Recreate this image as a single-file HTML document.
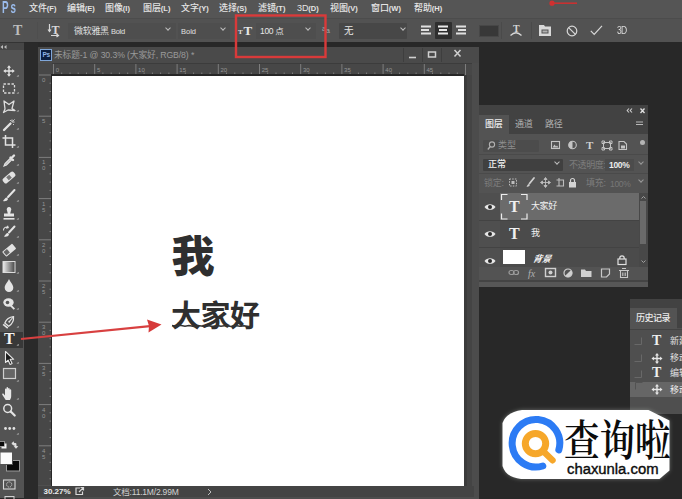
<!DOCTYPE html>
<html lang="zh-CN">
<head>
<meta charset="utf-8">
<title>Photoshop</title>
<style>
*{margin:0;padding:0;box-sizing:border-box}
html,body{width:682px;height:499px;overflow:hidden;background:#282828}
body{position:relative;font-family:"Liberation Sans","Noto Sans CJK SC",sans-serif;color:#d6d6d6;font-size:9px;line-height:1}
.a{position:absolute}
.t{position:absolute;white-space:nowrap}
svg{position:absolute;overflow:visible}
small{font-size:7.500px;font-weight:bold}
#menubar{left:0;top:0;width:682px;height:18px;background:#555}
#menubar .t{top:3.500px;font-size:9px;color:#e4e4e4;letter-spacing:-0.1px;font-weight:500}
#menubar .t small{letter-spacing:0}
#optbar{left:0;top:18px;width:682px;height:23.500px;background:#525252;border-top:1px solid #4c4c4c}
.dd{position:absolute;top:4px;height:16px;background:#474747;border-radius:1px}
.chev{position:absolute;width:4px;height:4px;border-right:1px solid #bdbdbd;border-bottom:1px solid #bdbdbd;transform:rotate(45deg)}
.sep{position:absolute;width:1px;background:#424242}
#tools{left:0;top:42px;width:24px;height:456px;background:#535353}
#toolhead{left:0;top:42px;width:24px;height:8px;background:#464646;border-top:1px solid #343434}
#doc{left:38px;top:47px;width:440.500px;height:452px;background:#4f4f4f}
#doctitle{left:38px;top:47px;width:440.500px;height:16px;background:#4a4a4a}
#canvas{left:52px;top:75.500px;width:412px;height:410px;background:#fff}
.ic{stroke:#d8d8d8;fill:none;stroke-width:1.2}
.icf{fill:#d8d8d8;stroke:none}
</style>
</head>
<body>
<!-- MENU BAR -->
<div class="a" id="menubar">
  <div class="t" style="left:1.500px;top:-1.500px;font-size:17px;color:#9bbcec;letter-spacing:3.200px;font-weight:bold;transform:scaleX(.58);transform-origin:0 0">Ps</div>
  <div class="t" style="left:29px">文件<small>(F)</small></div>
  <div class="t" style="left:67px">编辑<small>(E)</small></div>
  <div class="t" style="left:105px">图像<small>(I)</small></div>
  <div class="t" style="left:143px">图层<small>(L)</small></div>
  <div class="t" style="left:181px">文字<small>(Y)</small></div>
  <div class="t" style="left:219px">选择<small>(S)</small></div>
  <div class="t" style="left:258px">滤镜<small>(T)</small></div>
  <div class="t" style="left:297px">3D<small>(D)</small></div>
  <div class="t" style="left:330px">视图<small>(V)</small></div>
  <div class="t" style="left:371px">窗口<small>(W)</small></div>
  <div class="t" style="left:414px">帮助<small>(H)</small></div>
</div>
<!-- OPTIONS BAR -->
<div class="a" id="optbar">
  <div class="t" style="left:13px;top:5px;font-family:'Liberation Serif',serif;font-size:14px;font-weight:bold;color:#bcbcbc">T</div>
  <div class="sep" style="left:37px;top:3px;height:17px;background:#4e4e4e"></div>
  <!-- text orientation icon -->
  <div class="t" style="left:51.500px;top:5px;font-family:'Liberation Serif',serif;font-size:12px;color:#d8d8d8;font-weight:bold">T</div>
  <svg style="left:48px;top:5px" width="14" height="13"><path class="ic" d="M1.5 0v7M0 5.5l1.5 2 1.5-2M3 11.5h7M8.5 10l2 1.5-2 1.5" stroke-width="1"/></svg>
  <div class="dd" style="left:68px;width:108px;background:#4e4e4e"></div>
  <div class="t" style="left:74px;top:8px;font-size:9px;color:#e0e0e0;letter-spacing:-0.3px">微软雅黑 <span style="font-size:7.5px">Bold</span></div>
  <div class="chev" style="left:166px;top:7px"></div>
  <div class="dd" style="left:178px;width:52px;background:#4e4e4e"></div>
  <div class="t" style="left:181px;top:9px;font-size:7.5px;color:#e0e0e0">Bold</div>
  <div class="chev" style="left:221px;top:7px"></div>
  <!-- size -->
  <div class="t" style="left:243.500px;top:5px;font-family:'Liberation Serif',serif;font-size:13px;color:#e6e6e6;font-weight:bold">T</div>
  <div class="t" style="left:238px;top:10px;font-family:'Liberation Serif',serif;font-size:7px;color:#e6e6e6;font-weight:bold">T</div>
  <div class="dd" style="left:256px;width:60px;background:#4e4e4e"></div>
  <div class="t" style="left:260px;top:8px;font-size:8.5px;color:#e6e6e6;letter-spacing:-0.3px">100 点</div>
  <div class="chev" style="left:306px;top:7px"></div>
  <div class="t" style="left:322px;top:6px;font-size:7px;color:#a8a8a8;letter-spacing:-0.5px">a<span style="font-size:8px;position:relative;top:2px">a</span></div>
  <div class="dd" style="left:339px;width:68px"></div>
  <div class="t" style="left:344px;top:7px;font-size:9.5px;color:#e6e6e6">无</div>
  <div class="chev" style="left:401px;top:7px"></div>
  <!-- align -->
  <svg style="left:421px;top:6px" width="10" height="11"><path d="M0 1.5h10M0 5h8M0 8.5h10" stroke="#e0e0e0" stroke-width="1.8" fill="none"/></svg>
  <div class="a" style="left:435px;top:3px;width:17px;height:17px;background:#2f2f2f;border-radius:1px"></div>
  <svg style="left:438px;top:6px" width="10" height="11"><path d="M0 1.5h10M1 5h8M0 8.5h10" stroke="#e8e8e8" stroke-width="1.8" fill="none"/></svg>
  <svg style="left:456px;top:6px" width="10" height="11"><path d="M0 1.5h10M2 5h8M0 8.5h10" stroke="#e0e0e0" stroke-width="1.8" fill="none"/></svg>
  <div class="a" style="left:478.500px;top:5.500px;width:20px;height:12.500px;background:#383838;border:1px solid #474747"></div>
  <div class="sep" style="left:501px;top:3px;height:17px;background:#4a4a4a"></div><div class="sep" style="left:531px;top:3px;height:17px;background:#4a4a4a"></div>
  <!-- warp text -->
  <div class="t" style="left:513px;top:5px;font-family:'Liberation Serif',serif;font-size:10px;color:#d6d6d6;font-weight:bold">T</div>
  <svg style="left:510px;top:12px" width="12" height="5"><path class="ic" d="M0.5 4.5Q6 -1 11.5 4.5" stroke-width="1.1"/></svg>
  <!-- panel icon -->
  <svg style="left:539px;top:6px" width="12" height="11"><path class="icf" d="M0 0h5l1 1.5h6V11H0z"/><path d="M2.5 4.5h7v4h-7z" fill="#535353"/><path class="icf" d="M3.5 5.5h5v2h-5z" opacity=".7"/></svg>
  <!-- cancel -->
  <svg style="left:566px;top:6px" width="12" height="12"><circle cx="6" cy="6" r="4.8" class="ic" stroke-width="1.6"/><path class="ic" d="M2.6 2.6l6.8 6.8" stroke-width="1.6"/></svg>
  <!-- check -->
  <svg style="left:590px;top:6px" width="13" height="11"><path class="ic" d="M0.8 5.8l3.4 3.6L12 0.8" stroke-width="1.5"/></svg>
  <div class="t" style="left:617px;top:7px;font-size:10px;color:#dcdcdc;letter-spacing:-0.8px;transform:scaleX(.85);transform-origin:0 0">3D</div>
</div>
<!-- TOOLS -->
<div class="a" id="tools"></div>
<div class="a" id="toolhead"></div>
<div class="a" style="left:24px;top:43px;width:14px;height:456px;background:#2a2a2a"></div>
<svg style="left:0;top:45px" width="8" height="4"><path d="M3 0L0.5 2 3 4zM6.5 0L4 2 6.5 4z" fill="#bdbdbd"/></svg>
<div class="a" style="left:0;top:332px;width:23px;height:16px;background:#383838"></div>
<svg style="left:0;top:0" width="24" height="499" viewBox="0 0 24 499">
<g fill="#8a8a8a">
<path d="M17 76.500h1.500v-1.500zM17 93.500h1.500v-1.500zM17 111.500h1.500v-1.500zM17 129.500h1.500v-1.500zM17 147.500h1.500v-1.500zM17 165.500h1.500v-1.500zM17 183.500h1.500v-1.500zM17 201.500h1.500v-1.500zM17 219.500h1.500v-1.500zM17 237.500h1.500v-1.500zM17 255.500h1.500v-1.500zM17 273.500h1.500v-1.500zM17 291.500h1.500v-1.500zM17 309.500h1.500v-1.500zM17 327.500h1.500v-1.500zM17 345.500h1.500v-1.500zM17 363.500h1.500v-1.500zM17 381.500h1.500v-1.500zM17 399.500h1.500v-1.500zM17 434.500h1.500v-1.500z" stroke="#9a9a9a" stroke-width=".6"/>
</g>
<!-- move -->
<g transform="translate(9,71) scale(.88)" fill="#e4e4e4" stroke="none">
<path d="M0-6.500l2.300 2.800h-1.500v2.900h2.900v-1.500L6.500 0 3.700 2.300v-1.500h-2.900v2.900h1.500L0 6.500-2.300 3.700h1.500v-2.900h-2.900v1.500L-6.500 0l2.800-2.300v1.500h2.900v-2.900h-1.500z"/>
</g>
<!-- marquee -->
<g transform="translate(9,88.500)"><rect x="-5.500" y="-4.500" width="11" height="9" fill="none" stroke="#dadada" stroke-width="1.300" stroke-dasharray="2.400 1.600"/></g>
<!-- lasso -->
<g transform="translate(9,106)" fill="none" stroke="#dedede" stroke-width="1.300" stroke-linejoin="round"><path d="M-5-5L0-1.500 5-5 3 2.500l3 2-7-.5-4.500 2.500 1.500-3.500z"/></g>
<!-- wand -->
<g transform="translate(9,124.500)" stroke="#e2e2e2" fill="none"><path d="M-5 5.500L1.500-1" stroke-width="2.300" stroke-linecap="round"/><path d="M3-5v2.500M5.500-2.500H3.200M5.500-5L4.200-3.700M1-4.500l.8.800M5 .5l-.8-.8" stroke-width="1"/></g>
<!-- crop -->
<g transform="translate(9,141.500)" stroke="#e2e2e2" fill="none" stroke-width="1.500"><path d="M-3.500-6.500v10h10M-6.500-3.500h10v10"/></g>
<!-- eyedropper -->
<g transform="translate(9,160.500)" stroke="#e2e2e2" fill="none"><path d="M-5 5.500l1-2.500 5-5 1.500 1.500-5 5z" stroke-width="1.100" fill="#bcbcbc"/><path d="M1.500-3l2.500 2.500M2.500-2.500l2.500-2.500" stroke-width="2.400" stroke-linecap="round"/></g>
<!-- healing -->
<g transform="translate(9,177.500) rotate(-40)"><rect x="-7" y="-3" width="14" height="6" rx="2" fill="#e2e2e2"/><rect x="-2" y="-2" width="4" height="4" fill="#777"/></g>
<!-- brush -->
<g transform="translate(9,196)" stroke="#e4e4e4" fill="none"><path d="M5.500-6L-1 1" stroke-width="2" stroke-linecap="round"/><path d="M-2 1.500c-2 0-2.500 2-4 3.500 2 .5 4.500 0 5-2z" fill="#e4e4e4" stroke="none"/></g>
<!-- stamp -->
<g transform="translate(9,214)" fill="#e4e4e4"><path d="M-2-3.500a2.300 2.300 0 1 1 4 0l-.8 3h3.800v3h-10v-3h3.800z"/><rect x="-5.500" y="4" width="11" height="1.600"/></g>
<!-- history brush -->
<g transform="translate(9,232)" stroke="#e4e4e4" fill="none"><path d="M5.500-5.500L0 0.500" stroke-width="2" stroke-linecap="round"/><path d="M-1 1c-2 0-2.500 2-4 3.500 2 .5 4.500 0 5-2z" fill="#e4e4e4" stroke="none"/><path d="M-5.500-1.500a3 3 0 0 1 4.500-3M-1.500-6.200l.7 1.900-2 .4" stroke-width="1.100"/></g>
<!-- eraser -->
<g transform="translate(9,250) rotate(-40)"><rect x="-6.500" y="-3" width="13" height="6.500" rx="1" fill="#e2e2e2"/><rect x="-5.500" y="-2" width="4.500" height="4.500" fill="#666"/></g>
<!-- gradient -->
<defs><linearGradient id="gr" x1="0" x2="1"><stop offset="0" stop-color="#efefef"/><stop offset="1" stop-color="#444"/></linearGradient></defs>
<rect x="3" y="261.500" width="12" height="11" fill="url(#gr)" stroke="#dcdcdc" stroke-width="1"/>
<!-- blur drop -->
<g transform="translate(9,285.500)" fill="#e4e4e4"><path d="M0-6.500C2 -2.500 4.300-.5 4.300 2.200a4.300 4.300 0 0 1-8.600 0C-4.300-.5-2-2.500 0-6.500z"/></g>
<!-- dodge -->
<g transform="translate(9,303.500)" fill="#e4e4e4"><ellipse cx="-.5" cy="-1" rx="5.200" ry="4.200"/><circle cx="-1.500" cy="-1" r="1.800" fill="#555"/><path d="M2.500 1.500l3.500 3.500-1.300 1.300-3.500-3.500z"/></g>
<!-- pen -->
<g transform="translate(9,322) rotate(40)" fill="none" stroke="#e4e4e4" stroke-width="1.300"><path d="M0-7C3-4 4-1 2.500 3.500h-5C-4-1-3-4 0-7z"/><path d="M0-6.500v5" stroke-width="1"/><circle cx="0" cy="-.5" r="1" fill="#e4e4e4" stroke="none"/><path d="M-3 5.500h6" stroke-width="1.600"/></g>
<!-- path select -->
<g transform="translate(9,358)"><path d="M-3.500-6.500v11l2.600-2.400 2 4.400 2-.9-2-4.300h3.600z" fill="#1a1a1a" stroke="#e6e6e6" stroke-width="1.100" stroke-linejoin="round"/></g>
<!-- rectangle -->
<rect x="3.500" y="368.500" width="12" height="10" fill="#666" stroke="#cfcfcf" stroke-width="1.200"/>
<!-- hand -->
<g transform="translate(9,393.500)" fill="#e6e6e6"><path d="M-3.300 6.500c-1-2-2.500-3.500-3.400-5.300-.4-.9.700-1.600 1.400-.8l1.300 1.500v-6c0-1.100 1.500-1.100 1.500 0v-1.500c0-1.100 1.600-1.100 1.600 0v1c0-1.100 1.600-1.100 1.600 0v1.200c0-1 1.500-1 1.500 0v6c0 1.700-.6 2.700-1.200 3.900z"/></g>
<!-- zoom -->
<g transform="translate(9,410)" fill="none" stroke="#e4e4e4"><circle cx="-1.300" cy="-1.500" r="3.900" stroke-width="1.500"/><path d="M1.700 1.500l4 4" stroke-width="2.200" stroke-linecap="round"/></g>
<!-- dots -->
<g fill="#e2e2e2"><circle cx="5.500" cy="428.500" r="1.400"/><circle cx="9.700" cy="428.500" r="1.400"/><circle cx="13.900" cy="428.500" r="1.400"/></g>
<!-- default colors / swap -->
<rect x="1.500" y="443.500" width="5" height="5" fill="#f4f4f4"/><rect x="-0.500" y="441.500" width="5" height="5" fill="#0c0c0c" stroke="#cfcfcf" stroke-width=".6"/>
<path d="M12.500 443.500h3.500v4M11.800 443.500l1.800-1.600v3.200zM16 448.300l-1.600-1.800h3.200z" fill="#e0e0e0" stroke="#e0e0e0" stroke-width=".9"/>
<!-- fg/bg -->
<rect x="6.500" y="460.500" width="13" height="10.500" fill="#0a0a0a" stroke="#9a9a9a" stroke-width="1"/>
<rect x="0" y="452" width="12.500" height="12.500" fill="#fbfbfb" stroke="#535353" stroke-width="1"/>
<!-- quick mask -->
<rect x="3.500" y="480" width="11.500" height="9" fill="none" stroke="#d8d8d8" stroke-width="1.100"/><circle cx="9.200" cy="484.500" r="2.600" fill="none" stroke="#d0d0d0" stroke-width="1" stroke-dasharray="1.200 .8"/>
<rect x="5" y="496.500" width="9" height="3" fill="none" stroke="#d0d0d0" stroke-width="1"/>
</svg>
<div class="t" style="left:4px;top:331px;font-family:'Liberation Serif',serif;font-size:16px;color:#f2f2f2;font-weight:bold">T</div>
<!-- DOCUMENT WINDOW -->
<div class="a" id="doc"></div>
<div class="a" id="doctitle"></div>
<div class="a" style="left:40px;top:49px;width:12px;height:12px;background:#0c1f3f;border:1px solid #7fa6d8"></div>
<div class="t" style="left:42.500px;top:52px;font-size:6.500px;font-weight:bold;color:#8fb6e6;letter-spacing:-0.3px">Ps</div>
<div class="t" style="left:54px;top:51px;font-size:8.700px;color:#9a9a9a;letter-spacing:-0.100px">未标题-1 @ 30.3% (大家好, RGB/8) *</div>
<div class="sep" style="left:403px;top:48px;height:14px;background:#3e3e3e"></div>
<div class="sep" style="left:422px;top:48px;height:14px;background:#3e3e3e"></div>
<div class="sep" style="left:441px;top:48px;height:14px;background:#3e3e3e"></div>
<svg style="left:404px;top:47px" width="74" height="16"><path d="M5 10.500h7" stroke="#d0d0d0" stroke-width="1.600" fill="none"/><rect x="24.500" y="5" width="7" height="5" fill="none" stroke="#d0d0d0" stroke-width="1.500"/><path d="M50.500 3l6 6.500M56.500 3l-6 6.500" stroke="#d0d0d0" stroke-width="1.500" fill="none"/></svg>
<div class="a" style="left:38px;top:63px;width:436px;height:12px;background:#474747;border-top:1px solid #3c3c3c"></div>
<div class="a" style="left:38px;top:63px;width:14px;height:422px;background:#474747"></div>
<svg style="left:0;top:0" width="682" height="499" viewBox="0 0 682 499"><g stroke="#8c8c8c" stroke-width="0.8" fill="none"><path d="M53.5 64V75M61.7 72.500V75M70.0 72.500V75M78.2 72.500V75M86.5 72.500V75M94.7 64V75M102.9 72.500V75M111.2 72.500V75M119.4 72.500V75M127.7 72.500V75M135.9 64V75M144.1 72.500V75M152.4 72.500V75M160.6 72.500V75M168.9 72.500V75M177.1 64V75M185.3 72.500V75M193.6 72.500V75M201.8 72.500V75M210.1 72.500V75M218.3 64V75M226.5 72.500V75M234.8 72.500V75M243.0 72.500V75M251.3 72.500V75M259.5 64V75M267.7 72.500V75M276.0 72.500V75M284.2 72.500V75M292.5 72.500V75M300.7 64V75M308.9 72.500V75M317.2 72.500V75M325.4 72.500V75M333.7 72.500V75M341.9 64V75M350.1 72.500V75M358.4 72.500V75M366.6 72.500V75M374.9 72.500V75M383.1 64V75M391.3 72.500V75M399.6 72.500V75M407.8 72.500V75M416.1 72.500V75M424.3 64V75M432.5 72.500V75M440.8 72.500V75M449.0 72.500V75M457.3 72.500V75M465.5 64V75M39 75.0H52M49.500 83.2H52M49.500 91.5H52M49.500 99.7H52M49.500 108.0H52M39 116.2H52M49.500 124.4H52M49.500 132.7H52M49.500 140.9H52M49.500 149.2H52M39 157.4H52M49.500 165.6H52M49.500 173.9H52M49.500 182.1H52M49.500 190.4H52M39 198.6H52M49.500 206.8H52M49.500 215.1H52M49.500 223.3H52M49.500 231.6H52M39 239.8H52M49.500 248.0H52M49.500 256.3H52M49.500 264.5H52M49.500 272.8H52M39 281.0H52M49.500 289.2H52M49.500 297.5H52M49.500 305.7H52M49.500 314.0H52M39 322.2H52M49.500 330.4H52M49.500 338.7H52M49.500 346.9H52M49.500 355.2H52M39 363.4H52M49.500 371.6H52M49.500 379.9H52M49.500 388.1H52M49.500 396.4H52M39 404.6H52M49.500 412.8H52M49.500 421.1H52M49.500 429.3H52M49.500 437.6H52M39 445.8H52M49.500 454.0H52M49.500 462.3H52M49.500 470.5H52M49.500 478.8H52"/></g><g font-size="6" fill="#969696" font-family="Liberation Sans, sans-serif"><text x="55.7" y="71.500">0</text><text x="96.9" y="71.500">5</text><text x="138.1" y="71.500">10</text><text x="179.3" y="71.500">15</text><text x="220.5" y="71.500">20</text><text x="261.7" y="71.500">25</text><text x="302.9" y="71.500">30</text><text x="344.1" y="71.500">35</text><text x="385.3" y="71.500">40</text><text x="426.5" y="71.500">45</text><text x="42" y="82.0">0</text><text x="42" y="123.2">5</text><text x="42" y="164.4">1</text><text x="42" y="170.4">0</text><text x="42" y="205.6">1</text><text x="42" y="211.6">5</text><text x="42" y="246.8">2</text><text x="42" y="252.8">0</text><text x="42" y="288.0">2</text><text x="42" y="294.0">5</text><text x="42" y="329.2">3</text><text x="42" y="335.2">0</text><text x="42" y="370.4">3</text><text x="42" y="376.4">5</text><text x="42" y="411.6">4</text><text x="42" y="417.6">0</text><text x="42" y="452.8">4</text><text x="42" y="458.8">5</text></g></svg>
<div class="a" style="left:51px;top:74px;width:413px;height:412px;background:#262626"></div><div class="a" id="canvas"></div>
<div class="a" style="left:464px;top:75px;width:8px;height:411px;background:#444;border-left:3px solid #3b3b3b"></div>
<div class="a" style="left:472px;top:63px;width:6.500px;height:436px;background:#4c4c4c"></div>
<div class="a" style="left:38px;top:486px;width:436px;height:11px;background:#444"></div>
<div class="a" style="left:38px;top:497px;width:441px;height:2px;background:#4e4e4e"></div>
<div class="t" style="left:43.500px;top:488px;font-size:8px;font-weight:bold;color:#ececec">30.27%</div>
<svg style="left:75px;top:487px" width="10" height="9"><path d="M5 1H1v6.500h6.500V4.500M4 5l4.500-4.500M5.500 0.500h3v3" stroke="#d8d8d8" stroke-width="1.200" fill="none"/></svg>
<div class="t" style="left:113px;top:487.500px;font-size:8.500px;color:#d2d2d2;letter-spacing:-0.2px">文档:11.1M/2.99M</div>
<svg style="left:207px;top:488px" width="5" height="8"><path d="M1 1l3 3-3 3" stroke="#bdbdbd" stroke-width="1" fill="none"/></svg>
<div class="t" id="wo" style="left:171.500px;top:232px;font-size:43px;font-weight:900;color:#2f2f2f;font-family:'Noto Sans CJK SC',sans-serif">我</div>
<div class="t" id="djh" style="left:171px;top:298px;font-size:30px;font-weight:bold;color:#2f2f2f;font-family:'Noto Sans CJK SC',sans-serif;letter-spacing:-0.5px">大家好</div>
<!-- LAYERS PANEL -->
<div class="a" style="left:479px;top:105px;width:169px;height:176px;background:#535353"></div>
<div class="a" style="left:479px;top:105px;width:169px;height:29px;background:#424242"></div>
<div class="a" style="left:479px;top:115px;width:30px;height:19px;background:#535353"></div>
<div class="a" style="left:479px;top:280px;width:169px;height:1.500px;background:#444"></div><div class="a" style="left:479px;top:281.500px;width:169px;height:5px;background:#575757"></div>
<svg style="left:626px;top:107px" width="20" height="7"><path d="M3 1.500L1.200 3.500 3 5.500M6 1.500L4.200 3.500 6 5.500" stroke="#cfcfcf" stroke-width="1.100" fill="none"/><path d="M14.500 1.500l4 4.500M18.500 1.500l-4 4.500" stroke="#e0e0e0" stroke-width="1.300" fill="none"/></svg>
<div class="t" style="left:485px;top:120px;font-size:9px;color:#ececec;letter-spacing:-0.3px;font-weight:500">图层</div>
<div class="t" style="left:515px;top:120px;font-size:9px;color:#b0b0b0;letter-spacing:-0.3px">通道</div>
<div class="t" style="left:545px;top:120px;font-size:9px;color:#b0b0b0;letter-spacing:-0.3px">路径</div>
<svg style="left:636px;top:121px" width="8" height="5"><path d="M0 1h7M0 3.500h7" stroke="#b8b8b8" stroke-width="1.200"/></svg>
<!-- filter row -->
<div class="a" style="left:483px;top:140px;width:56px;height:12px;background:#4c4c4c;border-radius:1px"></div><div class="a" style="left:479px;top:154px;width:169px;height:1px;background:#4a4a4a"></div><div class="a" style="left:479px;top:173px;width:169px;height:1px;background:#4a4a4a"></div>
<svg style="left:487px;top:141px" width="9" height="10"><circle cx="5" cy="3.500" r="2.600" fill="none" stroke="#b0b0b0" stroke-width="1.100"/><path d="M3.300 5.500L0.800 8.500" stroke="#b0b0b0" stroke-width="1.300"/></svg>
<div class="t" style="left:498px;top:141px;font-size:9px;color:#8e8e8e">类型</div>
<svg style="left:550px;top:139px" width="95" height="14">
 <rect x="1.500" y="2.500" width="8" height="7" fill="none" stroke="#c4c4c4" stroke-width="1.100"/><path d="M2.500 8.500l2-3 1.500 2 1-1 1.500 2z" fill="#c4c4c4"/>
 <circle cx="22.500" cy="6" r="3.800" fill="none" stroke="#c4c4c4" stroke-width="1.100"/><path d="M22.500 2.200a3.800 3.800 0 0 0 0 7.600z" fill="#c4c4c4"/>
 <text x="36" y="10" font-family="Liberation Serif, serif" font-weight="bold" font-size="11" fill="#d0d0d0">T</text>
 <path d="M53.500 3.500h7v6h-7zM52 2h2.500v2.500H52zM59.500 2H62v2.500h-2.500zM52 8.500h2.500V11H52zM59.500 8.500H62V11h-2.500z" fill="none" stroke="#c4c4c4" stroke-width="1"/>
 <path d="M69 2.500h5l2.500 2.500v5.500H69z" fill="none" stroke="#c4c4c4" stroke-width="1.100"/><rect x="71" y="6.500" width="4" height="3" fill="#c4c4c4"/>
 <circle cx="92.500" cy="3.500" r="2.500" fill="#b4b4b4"/>
</svg>
<!-- blend row -->
<div class="a" style="left:483px;top:158.500px;width:80px;height:12px;background:#404040;border-radius:1px"></div>
<div class="t" style="left:488px;top:160px;font-size:9px;color:#f0f0f0;font-weight:500">正常</div>
<div class="chev" style="left:555px;top:160px"></div>
<div class="t" style="left:569px;top:160.500px;font-size:9px;color:#7d7d7d;letter-spacing:-0.4px">不透明度:</div>
<div class="a" style="left:605px;top:159px;width:29px;height:12px;background:#4c4c4c"></div>
<div class="t" style="left:609px;top:161px;font-size:8.500px;color:#ededed;font-weight:bold;letter-spacing:-0.3px">100%</div>
<div class="chev" style="left:639px;top:160px;border-color:#999"></div>
<!-- lock row -->
<div class="t" style="left:484px;top:178.500px;font-size:9px;color:#7d7d7d;letter-spacing:-0.3px">锁定:</div>
<svg style="left:507px;top:176px" width="65" height="14">
 <path d="M2.500 3h7v7h-7z" fill="none" stroke="#bdbdbd" stroke-width="1" stroke-dasharray="1.500 1.200"/><rect x="4.500" y="5" width="3" height="3" fill="#bdbdbd"/>
 <path d="M27 2l-4.500 5.500" stroke="#cfcfcf" stroke-width="1.800" stroke-linecap="round"/><path d="M22 8c-1.500 0-1.500 1.500-2.500 2.500 1.500.5 3 0 3.300-1.500z" fill="#cfcfcf"/>
 <path d="M38.500 2.500v8M34.500 6.500h8M38.500 1.500l-1.500 2h3zM38.500 11.500l-1.500-2h3zM33.500 6.500l2-1.500v3zM43.500 6.500l-2-1.500v3z" stroke="#bdbdbd" stroke-width=".9" fill="#bdbdbd"/>
 <path d="M49.500 4h7v6h-7M52 2v8" fill="none" stroke="#bdbdbd" stroke-width="1.100"/>
 <rect x="62" y="6" width="7" height="5.500" fill="#d4d4d4"/><path d="M63.500 6V4.500a2 2 0 0 1 4 0V6" fill="none" stroke="#d4d4d4" stroke-width="1.200"/>
</svg>
<div class="t" style="left:586px;top:178.500px;font-size:9px;color:#7d7d7d;letter-spacing:-0.3px">填充:</div>
<div class="t" style="left:610px;top:179.500px;font-size:8.500px;color:#777;letter-spacing:-0.3px">100%</div>
<div class="chev" style="left:639px;top:178px;border-color:#999"></div>
<!-- layer rows -->
<div class="a" style="left:479px;top:193px;width:160px;height:74px;background:#4b4b4b"></div>
<div class="a" style="left:479px;top:193px;width:21px;height:74px;background:#4f4f4f"></div>
<div class="a" style="left:500px;top:193px;width:139px;height:27px;background:#6b6b6b"></div>
<div class="a" style="left:479px;top:220px;width:160px;height:1px;background:#434343"></div>
<div class="a" style="left:479px;top:247px;width:160px;height:1px;background:#434343"></div>
<div class="a" style="left:639px;top:193px;width:9px;height:74px;background:#484848"></div>
<div class="a" style="left:640px;top:201px;width:6px;height:43px;background:#6a6a6a"></div>
<svg style="left:640px;top:194px" width="7" height="76"><path d="M1.500 4.500l2-2 2 2M1.500 66.500l2 2 2-2" stroke="#a0a0a0" stroke-width="1" fill="none"/></svg>
<!-- eyes -->
<svg style="left:484px;top:202px" width="12" height="70">
 <g><path d="M0.500 5C3 1.200 9 1.200 11.500 5 9 8.800 3 8.800 0.500 5z" fill="#e8e8e8"/><circle cx="6" cy="5" r="2" fill="#2a2a2a"/></g>
 <g transform="translate(0,27)"><path d="M0.500 5C3 1.200 9 1.200 11.500 5 9 8.800 3 8.800 0.500 5z" fill="#e8e8e8"/><circle cx="6" cy="5" r="2" fill="#2a2a2a"/></g>
 <g transform="translate(0,54)"><path d="M0.500 5C3 1.200 9 1.200 11.500 5 9 8.800 3 8.800 0.500 5z" fill="#e8e8e8"/><circle cx="6" cy="5" r="2" fill="#2a2a2a"/></g>
</svg>
<!-- thumbs -->
<svg style="left:501px;top:194px" width="27" height="26"><path d="M0.500 6V0.500h6M20 0.500h6V6M26 19.500V25h-6M6.500 25h-6v-5.500" fill="none" stroke="#ededed" stroke-width="1.200"/></svg>
<div class="t" style="left:509px;top:199px;font-family:'Liberation Serif',serif;font-size:16px;font-weight:bold;color:#f0f0f0">T</div>
<div class="t" style="left:509px;top:226px;font-family:'Liberation Serif',serif;font-size:16px;font-weight:bold;color:#f0f0f0">T</div>
<div class="a" style="left:503px;top:250px;width:22px;height:14px;background:#fff"></div>
<div class="t" style="left:531px;top:202px;font-size:9px;color:#f2f2f2;letter-spacing:-0.4px">大家好</div>
<div class="t" style="left:531px;top:229px;font-size:9px;color:#f2f2f2">我</div>
<div class="t" style="left:533px;top:255px;font-size:9px;color:#f2f2f2;font-style:italic;font-weight:bold;transform:skewX(-12deg)">背景</div>
<svg style="left:617px;top:255px" width="10" height="10"><rect x="1" y="4" width="8" height="5.500" fill="none" stroke="#e0e0e0" stroke-width="1.200"/><path d="M2.800 4V3a2.200 2.200 0 0 1 4.400 0V4" fill="none" stroke="#e0e0e0" stroke-width="1.200"/></svg>
<!-- bottom bar -->
<div class="a" style="left:479px;top:265px;width:168px;height:18px;background:#535353;opacity:.0"></div>
<svg style="left:507.500px;top:265.500px" width="130" height="14">
 <g stroke="#9c9c9c" fill="none" stroke-width="1.200"><rect x="1" y="4.500" width="5" height="4" rx="2"/><rect x="5.500" y="4.500" width="5" height="4" rx="2"/></g>
 <text x="20" y="11" font-family="Liberation Serif, serif" font-style="italic" font-size="10" fill="#b0b0b0">fx</text>
 <rect x="37.500" y="2.500" width="10" height="8" fill="none" stroke="#d0d0d0" stroke-width="1.400"/><circle cx="42.500" cy="6.500" r="2" fill="#d0d0d0"/>
 <circle cx="60" cy="7" r="4" fill="none" stroke="#d0d0d0" stroke-width="1.200"/><path d="M60 3a4 4 0 0 1 0 8z" fill="#d0d0d0" transform="rotate(45 60 7)"/>
 <path d="M73 3.500h4l1 1.500h5.500v6H73z" fill="#d0d0d0"/>
 <path d="M93.500 3h8v5l-3 3h-5z" fill="none" stroke="#c8c8c8" stroke-width="1.200"/>
 <path d="M112.500 4.500h7v7h-7zM111 4.500h10M114 2.500h4M114.800 6.500v3.500M117.200 6.500v3.500" fill="none" stroke="#c8c8c8" stroke-width="1.100"/>
</svg>
<!-- HISTORY PANEL -->
<div class="a" style="left:630px;top:299px;width:52px;height:115px;background:#4f4f4f"></div>
<div class="a" style="left:630px;top:299px;width:52px;height:29px;background:#424242"></div>
<div class="a" style="left:630px;top:308px;width:47px;height:21px;background:#535353"></div>
<div class="t" style="left:636px;top:313.500px;font-size:9px;color:#ececec;letter-spacing:-0.500px;font-weight:500">历史记录</div>
<div class="a" style="left:630px;top:329px;width:52px;height:1px;background:#434343"></div>
<div class="a" style="left:630px;top:382px;width:52px;height:15px;background:#666"></div>
<svg style="left:632px;top:330px" width="50" height="70">
 <g fill="none" stroke="#686868" stroke-width="1"><path d="M2.500 14.500h7v-7"/><path d="M2.500 31.500h7v-7"/><path d="M2.500 47.500h7v-7"/></g>
 <path d="M3.500 52.500h7M3.500 52.500v7" fill="none" stroke="#525252" stroke-width="1"/>
 <g transform="translate(25,28.500)" fill="#e6e6e6"><path d="M0-5.500l2 2.400h-1.300v2.400h2.400v-1.300L5.500 0 3.100 2v-1.300h-2.400v2.400h1.300L0 5.500-2 3.100h1.300v-2.400h-2.400v1.300L-5.500 0l2.400-2v1.300h2.400v-2.400h-1.300z"/></g>
 <g transform="translate(25,59.500)" fill="#e6e6e6"><path d="M0-5.500l2 2.400h-1.300v2.400h2.400v-1.300L5.500 0 3.100 2v-1.300h-2.400v2.400h1.300L0 5.500-2 3.100h1.300v-2.400h-2.400v1.300L-5.500 0l2.400-2v1.300h2.400v-2.400h-1.300z"/></g>
</svg>
<div class="t" style="left:652px;top:334px;font-family:'Liberation Serif',serif;font-size:14px;font-weight:bold;color:#eee">T</div>
<div class="t" style="left:652px;top:366px;font-family:'Liberation Serif',serif;font-size:14px;font-weight:bold;color:#eee">T</div>
<div class="t" style="left:670px;top:337px;font-size:9px;color:#e0e0e0">新建文字图层</div>
<div class="t" style="left:670px;top:354px;font-size:9px;color:#e0e0e0">移动</div>
<div class="t" style="left:670px;top:369px;font-size:9px;color:#e0e0e0">编辑文字图层</div>
<div class="t" style="left:670px;top:386px;font-size:9px;color:#f0f0f0">移动</div>
<!-- WATERMARK -->
<svg style="left:0;top:0" width="682" height="499" viewBox="0 0 682 499">
 <defs><filter id="fz" x="-20%" y="-20%" width="140%" height="140%"><feGaussianBlur stdDeviation="2.200"/></filter></defs>
 <path d="M522 410H648.500l21 10.500V470.500l-10 8.500H521Q506 477.500 502.500 466V423Q506 412.500 522 410z" fill="#cfd6cf" opacity=".4" filter="url(#fz)"/>
 <path d="M522 410H648.500l21 10.500V470.500l-10 8.500H521Q506 477.500 502.500 466V423Q506 412.500 522 410z" fill="#fff"/>
 <path d="M542.800 466A23.800 23.800 0 1 1 558.800 449.900" fill="none" stroke="#2c7bf4" stroke-width="7" stroke-linecap="round"/>
 <circle cx="535.500" cy="443.600" r="10.200" fill="none" stroke="#f6a72a" stroke-width="7"/>
 <path d="M543.500 451.500L552.500 460.300" stroke="#f6a72a" stroke-width="6.400" stroke-linecap="round" fill="none"/>
 <text x="564" y="456" font-family="'Liberation Serif','Noto Serif CJK SC',serif" font-size="43" font-weight="600" fill="#0c0c0c" textLength="106.500" lengthAdjust="spacingAndGlyphs">查询啦</text>
 <text x="567" y="473.800" font-family="'Liberation Sans',sans-serif" font-size="15.500" fill="#0c0c0c" stroke="#0c0c0c" stroke-width=".4" textLength="91.500" lengthAdjust="spacingAndGlyphs">chaxunla.com</text>
</svg>
<!-- ANNOTATIONS -->
<svg style="left:0;top:0" width="682" height="499" viewBox="0 0 682 499">
 <rect x="236" y="15.500" width="89.500" height="41.500" fill="none" stroke="#d93a3a" stroke-width="2.400"/>
 <circle cx="552" cy="3.200" r="2.600" fill="#cf3030"/><path d="M552 3.200H577" stroke="#cf3030" stroke-width="1.500"/>
 <path d="M21 339L150 326.200" stroke="#d84040" stroke-width="2.200" fill="none"/>
 <path d="M161.500 324.500L147 319.500l2 6.500-0.500 6.500z" fill="#d63a3a"/>
 <path d="M172 325.500l4 .8 4-1 5 1 4-.8 5 1 4-1 5 .8 5-.8 4 1 5-1 4 .8 5-.8 5 1 4-1 5 .8 4-.6 5 .8 3-.4" stroke="#333" stroke-width="1.500" fill="none"/>
</svg>
</body>
</html>
